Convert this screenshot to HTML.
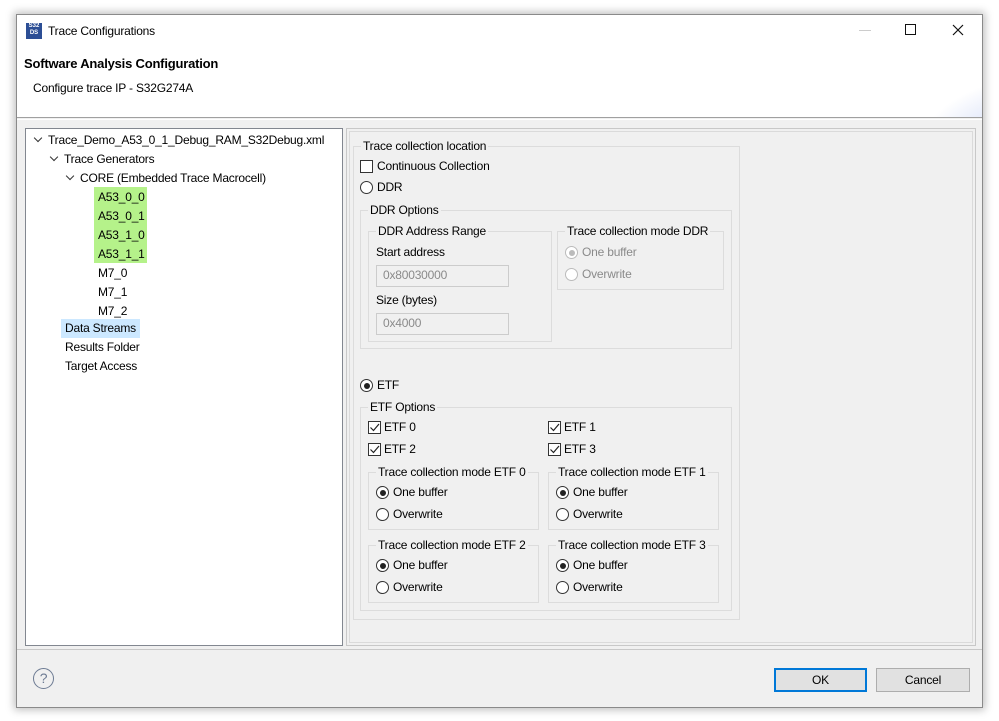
<!DOCTYPE html>
<html><head><meta charset="utf-8"><style>
*{box-sizing:border-box;margin:0;padding:0}
body{width:999px;height:721px;background:#fff;position:relative;overflow:hidden;font-family:"Liberation Sans",sans-serif;font-size:12px;color:#000;letter-spacing:-0.2px}
.a{position:absolute;white-space:nowrap}
.win{position:absolute;left:16px;top:14px;width:967px;height:694px;background:#f0f0f0;border:1px solid #8a8a8a;box-shadow:0 0 8px 2px rgba(0,0,0,.25)}
.g{position:absolute;border:1px solid #dcdcdc}
.gl{position:absolute;top:-9px;left:7px;background:#f0f0f0;padding:0 2px;line-height:16px}
.cb{position:absolute;width:13px;height:13px;border:1px solid #333;background:#fff}
.cb svg{position:absolute;left:0;top:0}
.rb{position:absolute;width:13px;height:13px;border:1px solid #333;border-radius:50%;background:#fff}
.rb.on::after{content:"";position:absolute;left:2.5px;top:2.5px;width:6px;height:6px;border-radius:50%;background:#222}
.dis{color:#8a8a8a}
.rb.d{border-color:#bbb}
.rb.d.on::after{background:#bbb}
.inp{position:absolute;border:1px solid #ccc;background:#f0f0f0;color:#8a8a8a;padding-left:6px;line-height:19px}
.t{line-height:19px}
.chev{display:inline-block;width:6px;height:6px;border-right:1.2px solid #333;border-bottom:1.2px solid #333;transform:rotate(45deg);margin:0 7px 3px 2px}
</style></head><body>
<div class="win">
  <div class="a" style="left:0;top:0;width:965px;height:102px;background:#fff"></div>
  <div class="a" style="left:830px;top:40px;width:135px;height:62px;background:radial-gradient(ellipse 180px 120px at 200px 110px,#c9d4f2 0%,#e3e9fa 50%,rgba(255,255,255,0) 75%)"></div>
  <div class="a" style="left:9px;top:8px;width:16px;height:16px;background:#2c4e95;color:#fff;font-size:6px;line-height:7px;text-align:center;font-weight:bold;letter-spacing:0">S32<br>DS</div>
  <div class="a" style="left:31px;top:8px;line-height:16px">Trace Configurations</div>
  <div class="a" style="left:842px;top:15px;width:12px;height:1px;background:#ccc"></div>
  <div class="a" style="left:888px;top:9px;width:11px;height:11px;border:1.3px solid #111"></div>
  <svg class="a" style="left:935px;top:9px" width="12" height="12"><path d="M1 1L11 11M11 1L1 11" stroke="#111" stroke-width="1.2"/></svg>
  <div class="a" style="left:7px;top:41px;font-weight:bold;font-size:13px">Software Analysis Configuration</div>
  <div class="a" style="left:16px;top:66px">Configure trace IP - S32G274A</div>
  <div class="a" style="left:0;top:102px;width:965px;height:1px;background:#a0a0a0"></div>
  <div class="a" style="left:0;top:104px;width:965px;height:1px;background:#fff"></div>

  <div class="a" style="left:8px;top:113px;width:318px;height:518px;background:#fff;border:1px solid #828790"></div>
  <div class="a" style="left:77px;top:172px;width:53px;height:76px;background:#b5f28a"></div>
  <div class="a" style="left:44px;top:304px;width:79px;height:19px;background:#cce8ff"></div>
  <div class="a t" style="left:16px;top:116px"><span class="chev"></span>Trace_Demo_A53_0_1_Debug_RAM_S32Debug.xml</div>
  <div class="a t" style="left:32px;top:135px"><span class="chev"></span>Trace Generators</div>
  <div class="a t" style="left:48px;top:154px"><span class="chev"></span>CORE (Embedded Trace Macrocell)</div>
  <div class="a t" style="left:81px;top:173px">A53_0_0</div>
  <div class="a t" style="left:81px;top:192px">A53_0_1</div>
  <div class="a t" style="left:81px;top:211px">A53_1_0</div>
  <div class="a t" style="left:81px;top:230px">A53_1_1</div>
  <div class="a t" style="left:81px;top:249px">M7_0</div>
  <div class="a t" style="left:81px;top:268px">M7_1</div>
  <div class="a t" style="left:81px;top:287px">M7_2</div>
  <div class="a t" style="left:48px;top:304px">Data Streams</div>
  <div class="a t" style="left:48px;top:323px">Results Folder</div>
  <div class="a t" style="left:48px;top:342px">Target Access</div>

  <div class="a" style="left:329px;top:113px;width:630px;height:518px;border:1px solid #c8c8c8;box-shadow:inset 0 0 0 2px #f0f0f0,inset 0 0 0 3px #dadada"></div>

  <div class="g" style="left:336px;top:131px;width:387px;height:474px">
    <div class="gl">Trace collection location</div>
  </div>
  <div class="cb" style="left:343px;top:145px"></div>
  <div class="a t" style="left:360px;top:142px">Continuous Collection</div>
  <div class="rb" style="left:343px;top:166px"></div>
  <div class="a t" style="left:360px;top:163px">DDR</div>

  <div class="g" style="left:343px;top:195px;width:372px;height:139px"><div class="gl">DDR Options</div></div>
  <div class="g" style="left:351px;top:216px;width:184px;height:111px"><div class="gl">DDR Address Range</div></div>
  <div class="a t" style="left:359px;top:228px">Start address</div>
  <div class="inp" style="left:359px;top:250px;width:133px;height:22px">0x80030000</div>
  <div class="a t" style="left:359px;top:276px">Size (bytes)</div>
  <div class="inp" style="left:359px;top:298px;width:133px;height:22px">0x4000</div>
  <div class="g" style="left:540px;top:216px;width:167px;height:59px"><div class="gl">Trace collection mode DDR</div></div>
  <div class="rb d on" style="left:548px;top:231px"></div>
  <div class="a t dis" style="left:565px;top:228px">One buffer</div>
  <div class="rb d" style="left:548px;top:253px"></div>
  <div class="a t dis" style="left:565px;top:250px">Overwrite</div>

  <div class="rb on" style="left:343px;top:364px"></div>
  <div class="a t" style="left:360px;top:361px">ETF</div>

  <div class="g" style="left:343px;top:392px;width:372px;height:204px"><div class="gl">ETF Options</div></div>
  <div class="cb" style="left:351px;top:406px"><svg width="11" height="11"><path d="M1.5 5.5L4.5 8.5L10 2" fill="none" stroke="#222" stroke-width="1.2"/></svg></div>
  <div class="a t" style="left:367px;top:403px">ETF 0</div>
  <div class="cb" style="left:531px;top:406px"><svg width="11" height="11"><path d="M1.5 5.5L4.5 8.5L10 2" fill="none" stroke="#222" stroke-width="1.2"/></svg></div>
  <div class="a t" style="left:547px;top:403px">ETF 1</div>
  <div class="cb" style="left:351px;top:428px"><svg width="11" height="11"><path d="M1.5 5.5L4.5 8.5L10 2" fill="none" stroke="#222" stroke-width="1.2"/></svg></div>
  <div class="a t" style="left:367px;top:425px">ETF 2</div>
  <div class="cb" style="left:531px;top:428px"><svg width="11" height="11"><path d="M1.5 5.5L4.5 8.5L10 2" fill="none" stroke="#222" stroke-width="1.2"/></svg></div>
  <div class="a t" style="left:547px;top:425px">ETF 3</div>

  <div class="g" style="left:351px;top:457px;width:171px;height:58px"><div class="gl">Trace collection mode ETF 0</div></div>
  <div class="rb on" style="left:359px;top:471px"></div><div class="a t" style="left:376px;top:468px">One buffer</div>
  <div class="rb" style="left:359px;top:493px"></div><div class="a t" style="left:376px;top:490px">Overwrite</div>
  <div class="g" style="left:531px;top:457px;width:171px;height:58px"><div class="gl">Trace collection mode ETF 1</div></div>
  <div class="rb on" style="left:539px;top:471px"></div><div class="a t" style="left:556px;top:468px">One buffer</div>
  <div class="rb" style="left:539px;top:493px"></div><div class="a t" style="left:556px;top:490px">Overwrite</div>
  <div class="g" style="left:351px;top:530px;width:171px;height:58px"><div class="gl">Trace collection mode ETF 2</div></div>
  <div class="rb on" style="left:359px;top:544px"></div><div class="a t" style="left:376px;top:541px">One buffer</div>
  <div class="rb" style="left:359px;top:566px"></div><div class="a t" style="left:376px;top:563px">Overwrite</div>
  <div class="g" style="left:531px;top:530px;width:171px;height:58px"><div class="gl">Trace collection mode ETF 3</div></div>
  <div class="rb on" style="left:539px;top:544px"></div><div class="a t" style="left:556px;top:541px">One buffer</div>
  <div class="rb" style="left:539px;top:566px"></div><div class="a t" style="left:556px;top:563px">Overwrite</div>

  <div class="a" style="left:0;top:634px;width:965px;height:1px;background:#c8c8c8"></div>
  <div class="a" style="left:16px;top:653px;width:21px;height:21px;border:1.5px solid #6d7b93;border-radius:50%;text-align:center;line-height:18px;font-size:14px;color:#6d7b93">?</div>
  <div class="a" style="left:757px;top:653px;width:93px;height:24px;border:2px solid #0078d7;background:#e1e1e1;text-align:center;line-height:20px">OK</div>
  <div class="a" style="left:859px;top:653px;width:94px;height:24px;border:1px solid #adadad;background:#e1e1e1;text-align:center;line-height:22px">Cancel</div>
</div>
</body></html>
